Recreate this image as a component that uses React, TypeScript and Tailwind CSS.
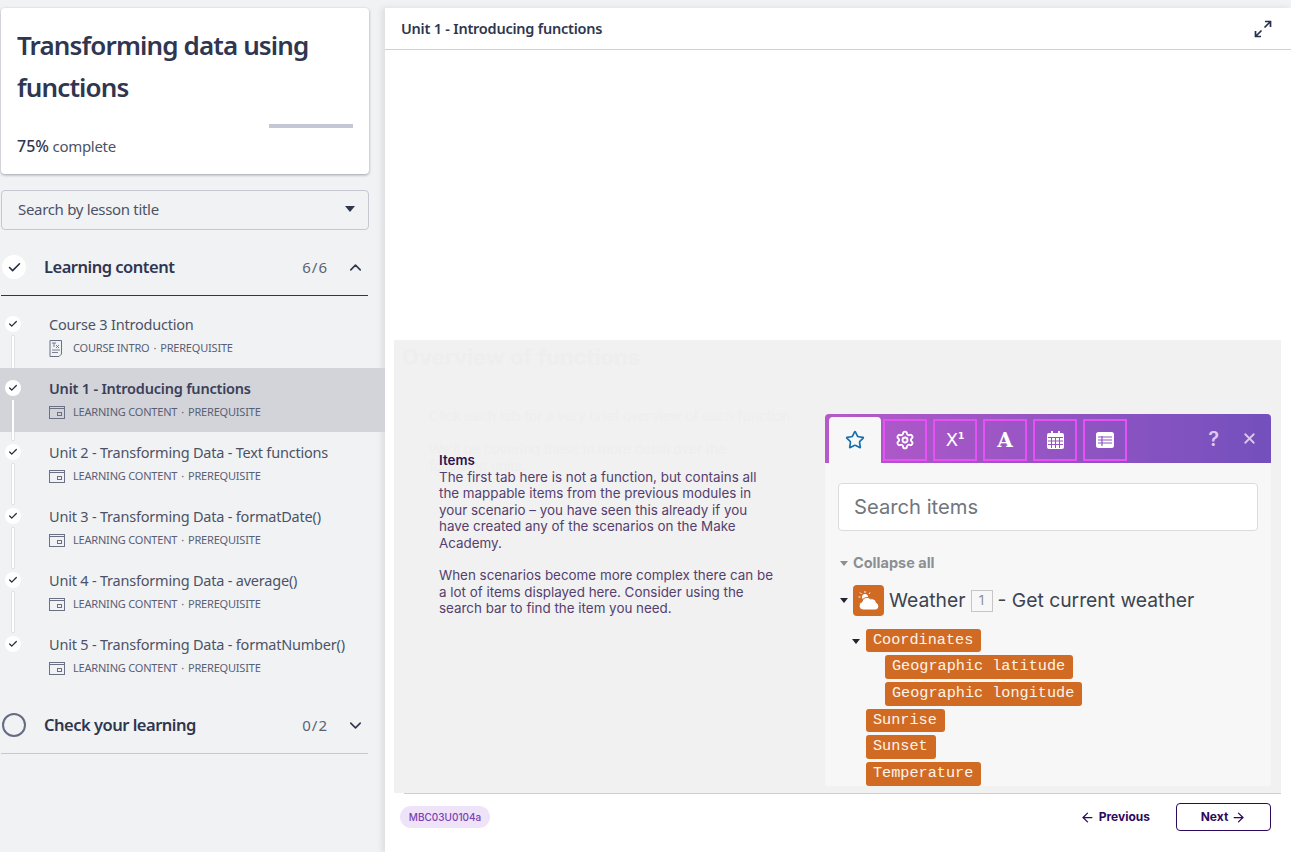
import { ChevronDown, ChevronUp, Check, Star, Settings, X, ArrowLeft, ArrowRight } from 'lucide-react';

const sans = "font-['Noto_Sans','Liberation_Sans',sans-serif]";

const lessons = [
  { title: 'Course 3 Introduction', kind: 'COURSE INTRO', intro: true },
  { title: 'Unit 1 - Introducing functions', kind: 'LEARNING CONTENT', active: true },
  { title: 'Unit 2 - Transforming Data - Text functions', kind: 'LEARNING CONTENT' },
  { title: 'Unit 3 - Transforming Data - formatDate()', kind: 'LEARNING CONTENT' },
  { title: 'Unit 4 - Transforming Data - average()', kind: 'LEARNING CONTENT' },
  { title: 'Unit 5 - Transforming Data - formatNumber()', kind: 'LEARNING CONTENT', last: true },
];

const IntroIcon = () => (
  <svg width="14" height="17" viewBox="0 0 14 17" fill="none" stroke="#6b7185" strokeWidth="1">
    <path d="M1 .5h11.5v13.5l-2.5 2.5H1z" />
    <path d="M3 3h4M5 3v4M7 5l3 3M10 5l-3 3M3 10h8M3 12.500h6" strokeWidth="0.9" />
  </svg>
);

const ContentIcon = () => (
  <svg width="16" height="13" viewBox="0 0 16 13" fill="none" stroke="#6b7185" strokeWidth="1">
    <rect x="0.500" y="0.500" width="15" height="12" />
    <path d="M.5 2.500h15" />
    <rect x="8.500" y="6.500" width="4" height="3" />
  </svg>
);

const ExpandIcon = () => (
  <svg width="18" height="18" viewBox="0 0 18 18" fill="none" stroke="#27304f" strokeWidth="1.700">
    <path d="M10.500 7.500 16 2M11 1.500h5.500V7M7.500 10.500 2 16M1.500 11v5.500H7" />
  </svg>
);

const WeatherIcon = () => (
  <svg width="24" height="22" viewBox="0 0 24 22" fill="white">
    <circle cx="8" cy="7" r="3" />
    <path d="M8 1v2M3 2.500 4.500 4M1.500 7h2M13 2.500 12 4" stroke="white" strokeWidth="1" />
    <path d="M6 20a4.200 4.200 0 0 1-1-8.200 5 5 0 0 1 8.500-3 5 5 0 0 1 6 4A3.800 3.800 0 0 1 19 20z" stroke="#d16b23" strokeWidth="1" />
  </svg>
);

const CalendarIcon = () => (
  <svg width="17" height="18" viewBox="0 0 17 18">
    <path d="M4 0h2v2h5V0h2v2h2a2 2 0 0 1 2 2v12a2 2 0 0 1-2 2H2a2 2 0 0 1-2-2V4a2 2 0 0 1 2-2h2z" fill="white" />
    <path d="M1 6.500h15M1 10h15M1 13.500h15M4.500 6v11M8.500 6v11M12.500 6v11" stroke="#9354c4" strokeWidth="1" />
  </svg>
);

const TableIcon = () => (
  <svg width="18" height="16" viewBox="0 0 18 16">
    <rect x="0" y="0" width="18" height="16" rx="2.500" fill="white" />
    <path d="M2 5h14M2 8h14M2 11h14M6 4v10" stroke="#8f53c4" strokeWidth="1.200" />
  </svg>
);

const Caret = ({ className }: { className: string }) => (
  <span className={`block h-0 w-0 border-x-[4px] border-t-[5px] border-x-transparent ${className}`} />
);

const Chip = ({ label, className = '' }: { label: string; className?: string }) => (
  <span className={`h-[23.700px] w-fit rounded-[3px] bg-[#d16b23] pl-[7px] pr-[8px] font-['Liberation_Mono',monospace] text-[15.200px] leading-[23px] text-[#fdf3ea] ${className}`}>
    {label}
  </span>
);

const TabBox = ({ children }: { children: React.ReactNode }) => (
  <div className="flex h-[42px] w-[44px] items-center justify-center border-2 border-[#e650f5] text-white">
    {children}
  </div>
);

const SectionHead = ({ done, title, count }: { done: boolean; title: string; count: string }) => (
  <div className="flex h-[56px] items-center pr-[2px]">
    {done ? (
      <div className="flex h-6 w-6 items-center justify-center rounded-full bg-white">
        <Check size={15} strokeWidth={2.500} className="text-[#252b40]" />
      </div>
    ) : (
      <div className="h-6 w-6 rounded-full border-2 border-[#656b82]" />
    )}
    <span className="ml-[18px] flex-1 text-[16.500px] font-semibold tracking-[-0.5px] text-[#2f3650]">{title}</span>
    <span className="text-[15px] tracking-[1px] text-[#5c6274]">{count}</span>
    <span className="ml-[18px] mr-[1px] text-[#2f3650]">
      {done ? <ChevronUp size={19} /> : <ChevronDown size={19} />}
    </span>
  </div>
);

export default function App() {
  return (
    <div className={`flex h-[852px] w-[1291px] overflow-hidden bg-[#f1f2f4] ${sans}`}>
      <aside className="w-[385px] shrink-0 pt-2">
        <div className="ml-px w-[368px]">
          <div className="h-[166px] rounded-[4px] bg-white pl-4 pr-4 pt-4 shadow-[0_1px_3px_rgba(30,35,60,0.4)]">
            <h1 className="text-[26px] font-semibold leading-[42px] tracking-[-0.87px] text-[#2f3650]">
              Transforming data using functions
            </h1>
            <div className="mt-4 flex h-1 w-[336px]">
              <div className="w-3/4" />
              <div className="flex-1 bg-[#c5c8d4]" />
            </div>
            <p className="mt-[8px] text-[15px] leading-5 tracking-[-0.3px] text-[#4c5266]">
              <span className="text-[16px] font-medium tracking-normal text-[#2f3650]">75%</span> complete
            </p>
          </div>
          <div className="mt-4 flex h-10 items-center justify-between rounded-[4px] border border-[#c5c8d4] pb-[2px] pl-4 pr-[13px] text-[15px] tracking-[-0.32px] text-[#4c5266]">
            Search by lesson title
            <Caret className="border-t-[#2f3650] !border-x-[5px] !border-t-[6px]" />
          </div>
          <div className="mt-[9px] w-[367px] border-b border-[#2f3650] pl-px">
            <SectionHead done title="Learning content" count="6/6" />
          </div>
        </div>

        <div className="mt-2">
          {lessons.map((l) => (
            <div
              key={l.title}
              className={`relative h-[64px] pl-[49px] pt-[10px] ${l.active ? 'bg-[#d3d4d9]' : ''}`}
            >
              <div className="absolute left-[5px] top-[12px] z-10 flex h-4 w-4 items-center justify-center rounded-full bg-white">
                <Check size={10} strokeWidth={3} className="text-[#252b40]" />
              </div>
              {!l.last && (
                <div className="absolute left-[12px] top-[32px] z-0 h-[40px] w-[2px] bg-white shadow-[0_0_0_0.5px_#cfd1d8]" />
              )}
              <p className={`text-[14.500px] leading-5 tracking-[-0.21px] ${l.active ? 'font-semibold text-[#3a4058]' : 'text-[#4c5266]'}`}>
                {l.title}
              </p>
              <div className="mt-[7px] flex h-[14px] items-center text-[11px] tracking-[-0.2px] text-[#596075]">
                <span className="flex w-6 items-center">{l.intro ? <IntroIcon /> : <ContentIcon />}</span>
                {l.kind}
                <span className="mx-[4px]">·</span>
                PREREQUISITE
              </div>
            </div>
          ))}
        </div>

        <div className="ml-px mt-[9px] w-[367px] border-b border-[#c5c8d4] pl-px">
          <SectionHead done={false} title="Check your learning" count="0/2" />
        </div>
      </aside>

      <main className="mt-2 flex min-w-0 flex-1 flex-col bg-white shadow-[-3px_0_6px_rgba(30,35,60,0.1)]">
        <header className="flex h-[42px] shrink-0 items-center justify-between border-b border-[#cfd1d3] pl-4 pr-[19px]">
          <span className="text-[14.500px] font-semibold tracking-[-0.23px] text-[#2f3650]">Unit 1 - Introducing functions</span>
          <ExpandIcon />
        </header>

        <div className="h-[290px] shrink-0" />

        <section className="relative ml-[9px] mr-[10px] h-[453px] shrink-0 bg-[#f1f1f1] pl-[431px] pr-[10px] pt-[74px] font-['Inter',sans-serif]">
          <div className="absolute left-[8px] top-[2px] w-[420px] text-[#eeeeee]">
            <h2 className="text-[22px] font-bold leading-[30px]">Overview of functions</h2>
            <p className="ml-[27px] mt-[34px] text-[13.600px]">Click each tab for a very brief overview of each function.</p>
            <p className="ml-[27px] mt-[15px] w-[320px] text-[13.600px] leading-[17px]">We'll be covering these in more detail over the following units.</p>
          </div>
          <div className="absolute left-[45px] top-[112px] w-[338px] text-[13.400px] leading-[16.500px] text-[#54406e]">
            <p className="font-semibold text-[#2d1250]">Items</p>
            <p>
              The first tab here is not a function, but contains all the mappable items from the previous modules in
              your scenario – you have seen this already if you have created any of the scenarios on the Make Academy.
            </p>
            <p className="mt-[16px]">
              When scenarios become more complex there can be a lot of items displayed here. Consider using the search
              bar to find the item you need.
            </p>
          </div>

          <div className="h-[372px] overflow-hidden rounded-t-[4px] bg-[#f7f7f7]">
            <div className="flex h-[49px] items-center bg-gradient-to-r from-[#b658c9] to-[#7350bd] pl-1 pr-[13px]">
              <div className="mt-[3px] flex h-[46px] w-[52px] items-center justify-center self-start rounded-t-[4px] bg-[#f7f7f7]">
                <Star size={20} strokeWidth={2} className="text-[#1a70ad]" />
              </div>
              <div className="ml-[2px] mt-[3px] flex gap-[6px]">
                <TabBox><Settings size={20} strokeWidth={2.200} /></TabBox>
                <TabBox>
                  <span className="flex items-start font-['DejaVu_Sans',sans-serif] text-[18px] font-medium leading-none">
                    X<span className="text-[9px] font-bold leading-[10px]">1</span>
                  </span>
                </TabBox>
                <TabBox>
                  <span className="font-['DejaVu_Serif',serif] text-[20px] font-bold leading-none">A</span>
                </TabBox>
                <TabBox><CalendarIcon /></TabBox>
                <TabBox><TableIcon /></TabBox>
              </div>
              <span className="ml-auto text-[20px] font-semibold text-[#dcc9ee]">?</span>
              <X size={17} strokeWidth={2.500} className="ml-[22px] text-[#dcc9ee]" />
            </div>

            <div className="px-[13px] pt-5">
              <div className="flex h-12 items-center rounded-[4px] border border-[#dcdcdc] bg-white pl-[15px] text-[20.200px] text-[#70767d]">
                Search items
              </div>
              <div className="mt-[22px] flex h-5 items-center pl-[2px] text-[14.500px] font-bold text-[#8b8f93]">
                <Caret className="mr-[5px] border-t-[#8b8f93]" />
                Collapse all
              </div>
              <div className="mt-[12px] flex h-[31px] items-center text-[19.300px] text-[#3b4450]">
                <Caret className="ml-[2px] mr-[5px] border-t-[#22262c]" />
                <div className="mr-[5px] flex h-[31px] w-[31px] items-center justify-center rounded-[4px] bg-[#d16b23]">
                  <WeatherIcon />
                </div>
                Weather
                <span className="mx-[5px] flex h-[22px] w-[22px] items-center justify-center border border-[#c6c6c6] text-[13px] text-[#8b8f93]">1</span>
                - Get current weather
              </div>
              <div className="mt-[12.500px] flex flex-col gap-[3px] pl-[28px]">
                <div className="relative">
                  <span className="absolute -left-[14px] top-[10px]"><Caret className="border-t-[#22262c]" /></span>
                  <Chip label="Coordinates" className="block" />
                </div>
                <Chip label="Geographic latitude" className="ml-[19px]" />
                <Chip label="Geographic longitude" className="ml-[19px]" />
                <Chip label="Sunrise" />
                <Chip label="Sunset" />
                <Chip label="Temperature" />
              </div>
            </div>
          </div>
        </section>

        <footer className="ml-[19px] mr-[10px] flex flex-1 items-start justify-between border-t border-[#cfcfcf] font-['Inter',sans-serif]">
          <span className="-ml-[4px] mt-3 flex h-[22px] w-[90px] items-center justify-center rounded-full bg-[#efe3fa] text-[10px] font-medium text-[#7b3fb0]">
            MBC03U0104a
          </span>
          <div className="mr-[10px] mt-[9px] flex items-center text-[12px] font-bold text-[#2d0a5e]">
            <span className="flex items-center gap-[4px]"><ArrowLeft size={15} />Previous</span>
            <span className="ml-[26px] flex h-[28px] w-[95px] items-center justify-center gap-[3px] rounded-[4px] border border-[#2d0a5e]">
              Next<ArrowRight size={15} />
            </span>
          </div>
        </footer>
      </main>
    </div>
  );
}
